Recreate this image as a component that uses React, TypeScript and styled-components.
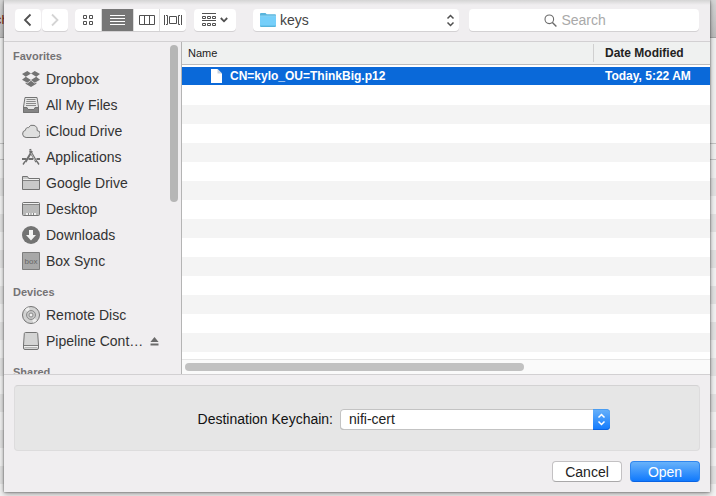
import React from "react";
import styled, { createGlobalStyle, css } from "styled-components";

const GlobalStyle = createGlobalStyle`
  * { box-sizing: border-box; }
  body {
    margin: 0;
    overflow: hidden;
    font-family: "Liberation Sans", Arial, sans-serif;
    font-size: 14px;
    color: #333;
  }
  button, input, select { font: inherit; color: inherit; margin: 0; }
  svg { display: block; flex: none; }
`;

const Backdrop = styled.div`
  position: relative;
  z-index: 0;
  display: flex;
  height: 100vh;
  padding: 0 6px 4px 4px;
  background:
    linear-gradient(#d6d6d6, #bdbdbd 37px, #a4a4a4 37px, #a4a4a4 38px, transparent 38px) no-repeat,
    linear-gradient(#c4c4c4, #c4c4c4) 0 143px / 100% 1px no-repeat,
    linear-gradient(#c4c4c4, #c4c4c4) 0 159px / 100% 1px no-repeat,
    linear-gradient(#f1f1f1, #f1f1f1) 0 0 / 100% 178px no-repeat,
    repeating-linear-gradient(#e3e3e3 0 18px, #f3f3f3 18px 36px) 0 178px;
`;

const BackdropText = styled.span`
  position: absolute;
  z-index: -1;
  top: 12px;
  left: -5px;
  font-size: 13px;
  line-height: 16px;
  color: #8b2a12;
`;

const Dialog = styled.main`
  flex: 1;
  min-width: 0;
  display: flex;
  flex-direction: column;
  background: #f0eef0;
  box-shadow: 0 0 2px rgba(0, 0, 0, 0.55), 0 2px 6px rgba(0, 0, 0, 0.35);
`;

const Toolbar = styled.div`
  flex: none;
  display: flex;
  height: 42px;
  padding: 9px 11px 0;
  border-bottom: 1px solid #d2d0d2;
  background: linear-gradient(#d4d4d4, #f0eef0 5px);
`;

const raised = css`
  height: 22px;
  background: #fff;
  border-radius: 4px;
  box-shadow: 0 1px 0 #d3d1d3;
`;

const Segments = styled.div<{ $joined?: boolean; $after: number }>`
  display: flex;
  flex: none;
  gap: 1px;
  height: 22px;
  margin-right: ${(p) => p.$after}px;
  ${(p) =>
    p.$joined &&
    css`
      overflow: hidden;
      border-radius: 4px;
      background: #dcdcdc;
      box-shadow: 0 1px 0 #d3d1d3;
    `}
`;

const ToolButton = styled.button<{ $width?: number; $active?: boolean; $raised?: boolean; $dim?: boolean }>`
  ${(p) => p.$raised && raised}
  flex: none;
  display: flex;
  align-items: center;
  justify-content: center;
  gap: 4px;
  width: ${(p) => p.$width ?? 26}px;
  height: 22px;
  padding: 0;
  border: 0;
  background: ${(p) => (p.$active ? "#777" : "#fff")};
  color: ${(p) => (p.$active ? "#fff" : p.$dim ? "#d4d4d4" : "#505050")};
`;

const PathBox = styled.div`
  ${raised}
  flex: 1 1 207px;
  min-width: 0;
  display: flex;
  align-items: center;
  gap: 4px;
  margin: 0 10px 0 17px;
  padding: 0 4px 0 7px;
`;

const PlainSelect = styled.select`
  flex: 1;
  min-width: 0;
  height: 22px;
  padding: 0;
  border: 0;
  background: none;
  appearance: none;
  outline: none;
  color: #444;
`;

const SearchBox = styled.label`
  ${raised}
  flex: 1 1 230px;
  min-width: 0;
  display: flex;
  align-items: center;
  gap: 4px;
  padding-left: 75px;
`;

const SearchInput = styled.input`
  flex: 1;
  min-width: 0;
  height: 22px;
  padding: 0;
  border: 0;
  background: none;
  outline: none;
  &::placeholder { color: #a9a9a9; opacity: 1; }
`;

const Browser = styled.div`
  flex: 1;
  min-height: 0;
  display: flex;
  border-bottom: 1px solid #d2d0d2;
`;

const Sidebar = styled.aside`
  flex: none;
  display: flex;
  width: 178px;
  overflow: hidden;
  border-right: 1px solid #b4b4b4;
`;

const Places = styled.nav`
  flex: 1;
  min-width: 0;
  padding-top: 4px;
`;

const Section = styled.section`
  margin-bottom: 8px;
`;

const SectionTitle = styled.h2`
  margin: 0;
  padding-left: 9px;
  font-size: 11px;
  line-height: 20px;
  font-weight: bold;
  color: #757375;
`;

const PlaceList = styled.ul`
  margin: 0;
  padding: 0;
  list-style: none;
`;

const Place = styled.li`
  display: flex;
  align-items: center;
  height: 26px;
  padding: 0 11px 0 18px;
`;

const PlaceLink = styled.a`
  flex: 1;
  min-width: 0;
  display: flex;
  align-items: center;
  gap: 6px;
  color: #333;
  text-decoration: none;
`;

const PlaceName = styled.span`
  white-space: nowrap;
`;

const EjectButton = styled.button`
  padding: 0;
  border: 0;
  background: none;
`;

const VerticalThumb = styled.div`
  flex: none;
  width: 8px;
  height: 157px;
  margin: 3px 3px 0 0;
  border-radius: 4px;
  background: #b6b6b6;
`;

const Listing = styled.div`
  flex: 1;
  min-width: 0;
  display: flex;
  flex-direction: column;
  background: #fff;
`;

const FileTable = styled.table`
  width: 100%;
  border-spacing: 0;
  table-layout: fixed;
`;

const HeadCell = styled.th<{ $sorted?: boolean }>`
  width: ${(p) => (p.$sorted ? "117px" : "auto")};
  height: 23px;
  padding: 0;
  border-bottom: 1px solid #bcbcbc;
  background: #eff1f0;
  text-align: left;
  font-size: ${(p) => (p.$sorted ? 12 : 11)}px;
  font-weight: ${(p) => (p.$sorted ? "bold" : "normal")};
  line-height: 18px;
  color: #222;
`;

const HeadLabel = styled.div<{ $divided?: boolean }>`
  padding-left: ${(p) => (p.$divided ? 11 : 6)}px;
  border-left: ${(p) => (p.$divided ? "1px solid #d0d0d0" : "0")};
`;

const FileCell = styled.td`
  height: 20px;
  padding: 0 0 0 12px;
  border-top: 2px solid #fff;
  background: #0a69d9;
  color: #fff;
  font-size: 12px;
  line-height: 18px;
  font-weight: bold;
  white-space: nowrap;
`;

const FileName = styled.div`
  display: flex;
  align-items: center;
  gap: 8px;
  padding-left: 17px;
`;

const EmptyRows = styled.div`
  flex: 1;
  margin-top: 1px;
  background: repeating-linear-gradient(#fff 0 19px, #f4f4f4 19px 38px);
`;

const HorizontalTrack = styled.div`
  flex: none;
  height: 15px;
  padding: 3px;
  border-top: 1px solid #e6e6e6;
  background: #fafafa;
`;

const HorizontalThumb = styled.div`
  width: 65%;
  height: 8px;
  border-radius: 4px;
  background: #c1c1c1;
`;

const Accessory = styled.div`
  flex: none;
  display: flex;
  align-items: center;
  justify-content: flex-end;
  gap: 7px;
  height: 66px;
  margin: 10px 10px 0;
  padding: 2px 89px 0 0;
  border: 1px solid #dddcdd;
  border-top-color: #d3d2d3;
  border-radius: 4px;
  background: #e6e6e6;
  color: #111;
`;

const KeychainBox = styled.div`
  flex: none;
  display: flex;
  width: 270px;
  height: 21px;
  border-radius: 4px;
  background: #fff;
  box-shadow: inset 0 0 0 1px #c3c3c3, inset 0 -1px 0 #a5a5a5;
`;

const KeychainSelect = styled(PlainSelect)`
  height: 21px;
  padding-left: 9px;
  color: #222;
`;

const Stepper = styled.span`
  display: flex;
  align-items: center;
  justify-content: center;
  width: 17px;
  height: 21px;
  border-radius: 0 4px 4px 0;
  background: linear-gradient(#68b2fa, #1079fd);
  box-shadow: inset 0 1px 0 #4a9df2, inset 0 -1px 0 #0a63e2;
  color: #fff;
  pointer-events: none;
`;

const Actions = styled.div`
  flex: none;
  display: flex;
  justify-content: flex-end;
  gap: 8px;
  padding: 10px 10px;
`;

const PushButton = styled.button<{ $primary?: boolean }>`
  width: 70px;
  height: 21px;
  padding: 0;
  border: 1px solid ${(p) => (p.$primary ? "#2f86ee" : "#c3c1c3")};
  border-bottom-color: ${(p) => (p.$primary ? "#0a63e2" : "#a9a8a9")};
  border-radius: 4px;
  background: ${(p) => (p.$primary ? "linear-gradient(#68b2fa, #1079fd)" : "#fff")};
  color: ${(p) => (p.$primary ? "#fff" : "#222")};
  line-height: 18px;
`;

const Chevron = ({ right }: { right?: boolean }) => (
  <svg width="10" height="14" viewBox="0 0 10 14" fill="none" stroke="currentColor" strokeWidth="1.8">
    <path d={right ? "M2 1.5 7.5 7 2 12.5" : "M7.5 1.5 2 7 7.5 12.5"} />
  </svg>
);

const UpDown = ({ light }: { light?: boolean }) => (
  <svg width="9" height="13" viewBox="0 0 9 13" fill="none" stroke={light ? "#fff" : "#505050"} strokeWidth="1.5">
    <path d="M1.5 4.5 4.5 1.5 7.5 4.5M1.5 8.5 4.5 11.5 7.5 8.5" />
  </svg>
);

const GridIcon = () => (
  <svg width="12" height="12" viewBox="0 0 12 12" fill="none" stroke="currentColor">
    <path d="M1.5 1.5h3v3h-3zM7.5 1.5h3v3h-3zM1.5 7.5h3v3h-3zM7.5 7.5h3v3h-3z" />
  </svg>
);

const LinesIcon = () => (
  <svg width="15" height="12" viewBox="0 0 15 12" stroke="currentColor">
    <path d="M0 1.5h15M0 4.5h15M0 7.5h15M0 10.5h15" />
  </svg>
);

const ColumnsIcon = () => (
  <svg width="16" height="12" viewBox="0 0 16 12" fill="none" stroke="currentColor">
    <path d="M.5 1.5h15v9H.5zM5.5 1.5v9M10.5 1.5v9" />
  </svg>
);

const CoverIcon = () => (
  <svg width="18" height="12" viewBox="0 0 18 12" fill="none" stroke="currentColor">
    <path d="M.5 1v10M2 1.500h1.500v9H2M17.500 1v10M16 1.500h-1.500v9H16M5.500 2.500h7v7h-7z" />
  </svg>
);

const ArrangeIcon = () => (
  <svg width="14" height="14" viewBox="0 0 14 14" fill="none" stroke="currentColor">
    <path d="M0 .5h14M0 7.5h14M.5 3.5h3v2h-3zM5.5 3.5h3v2h-3zM10.5 3.5h3v2h-3zM.5 10.5h3v2h-3zM5.5 10.5h3v2h-3zM10.5 10.5h3v2h-3z" />
  </svg>
);

const DownIcon = () => (
  <svg width="8" height="6" viewBox="0 0 8 6" fill="none" stroke="currentColor" strokeWidth="1.8">
    <path d="M.8 1 4 4.3 7.2 1" />
  </svg>
);

const BlueFolder = () => (
  <svg width="16" height="14" viewBox="0 0 16 14">
    <path d="M0 1q0-1 1-1h4.5l1.2 1.3H15q1 0 1 1V13q0 1-1 1H1q-1 0-1-1z" fill="#58b4dc" />
    <path d="M0 3.2h16V12.6H0z" fill="#76cffa" />
    <path d="M0 2.6h16v.8H0z" fill="#9bdcf8" />
  </svg>
);

const SearchIcon = () => (
  <svg width="13" height="13" viewBox="0 0 13 13" fill="none" stroke="#6a6a6a" strokeWidth="1.1">
    <circle cx="5.3" cy="5.3" r="4.3" />
    <path d="m8.4 8.4 4 4" strokeWidth="1.4" />
  </svg>
);

const FileIcon = () => (
  <svg width="11" height="14" viewBox="0 0 11 14">
    <path d="M0 0h6.5L11 4.5V14H0z" fill="#fff" />
    <path d="M6.5 0v4.5H11z" fill="#c9d3df" />
  </svg>
);

const Eject = () => (
  <svg width="9" height="9" viewBox="0 0 9 9" fill="#6a6a6a">
    <path d="M4.5 0 8.6 5H.4zM.5 6.5h8v2h-8z" />
  </svg>
);

const glyphs: Record<string, React.ReactNode> = {
  dropbox: (
    <path
      fill="#737373"
      d="M5.3 1 9 3.6 3.8 6.8 0 4zM12.7 1 18 4l-3.8 2.8L9 3.6zM3.8 6.8 9 10l-3.7 2.8L0 9.7zM14.2 6.8 18 9.7l-5.3 3.1L9 10zM9 10.8l3.7 2.8 1.7-1v1.100L9 17l-5.400-3.300v-1.100l1.700 1z"
    />
  ),
  files: (
    <>
      <path d="M3 1.5h12l1.500 9.500v5.500h-15V11z" fill="#e6e6e6" stroke="#737373" />
      <path d="M4.500 3.500h9M4.300 5.500h9.400M4 7.500h10M4 9.500h10" stroke="#8a8a8a" />
      <path d="M1.500 11.500h3.500l1 2h6l1-2h3.500v5h-15z" fill="#858585" stroke="#737373" />
    </>
  ),
  cloud: (
    <path
      d="M4.100 15.500a3.700 3.700 0 0 1-.6-7.300 2.500 2.500 0 0 1 3-2.600 4.600 4.600 0 0 1 8.600 2.900 3.500 3.500 0 0 1-.8 7z"
      fill="#dfdfdf"
      stroke="#737373"
    />
  ),
  apps: (
    <g fill="none" stroke="#6e6e6e">
      <path d="M10 3 3.500 14" strokeWidth="2" />
      <path d="m8 3 6.500 11" strokeWidth="2.400" />
      <path d="m9 5 4.500 8" stroke="#d0d0d0" strokeWidth=".8" />
      <path d="M0 11h4.500M6.500 11h4.500M14.500 11H18" strokeWidth="2" />
      <path d="m3 13.500-2 3M15 13.500l2 3M7.300 2.200l2-.7" strokeWidth="1.400" />
    </g>
  ),
  folder: (
    <>
      <path d="M.5 15.500v-13h5l1.200 2h10.800v11z" fill="#c9c9c9" stroke="#737373" />
      <path d="M1 5.500h16" stroke="#f0f0f0" />
      <path d="M1 6.500h16" stroke="#838383" />
    </>
  ),
  desktop: (
    <>
      <rect x=".5" y="2.5" width="17" height="13" rx="1" fill="#b9b9b9" stroke="#737373" />
      <path d="M1 3.500h16" stroke="#f0f0f0" />
      <path d="M1 4.500h16" stroke="#838383" />
      <path d="M4 13h10v2H4z" fill="#f2f2f2" />
      <path d="M6.500 13v2M9 13v2M11.500 13v2" stroke="#888" />
    </>
  ),
  downloads: (
    <>
      <circle cx="9" cy="9" r="9" fill="#737373" />
      <path d="M7 4h4v5h3l-5 5.500L4 9h3z" fill="#f4f4f4" />
    </>
  ),
  box: (
    <>
      <path d="M.5.5h17v17H.5z" fill="#a8a8a8" stroke="#7e7e7e" />
      <text x="9" y="12" textAnchor="middle" fontSize="8" fontFamily="Liberation Sans, sans-serif" fill="#666">
        box
      </text>
    </>
  ),
  disc: (
    <>
      <circle cx="9" cy="9" r="8.5" fill="#d2d2d2" stroke="#737373" />
      <path d="M9 9 3 3.500A8 8 0 0 1 7 1.300zM9 9l6 5.500a8 8 0 0 1-4 2.200z" fill="#efefef" />
      <circle cx="9" cy="9" r="4.500" fill="#c6c6c6" stroke="#8a8a8a" />
      <circle cx="9" cy="9" r="2" fill="#f2f2f2" stroke="#8a8a8a" />
    </>
  ),
  drive: (
    <>
      <path d="M3.500.5h11q1 0 1.200 1l.8 11.500v3q0 1.500-1.500 1.500H3q-1.500 0-1.500-1.500v-3L2.300 1.500q.2-1 1.200-1z" fill="#d4d4d4" stroke="#737373" />
      <path d="M2 13.500h14" stroke="#7d7d7d" />
      <path d="M2 14.500h14" stroke="#f0f0f0" />
      <path d="M3 15.500h12" stroke="#b5b5b5" />
    </>
  ),
};

const PlaceIcon = ({ name }: { name: string }) => (
  <svg width="18" height="18" viewBox="0 0 18 18">
    {glyphs[name]}
  </svg>
);

const sections = [
  {
    title: "Favorites",
    places: [
      ["dropbox", "Dropbox"],
      ["files", "All My Files"],
      ["cloud", "iCloud Drive"],
      ["apps", "Applications"],
      ["folder", "Google Drive"],
      ["desktop", "Desktop"],
      ["downloads", "Downloads"],
      ["box", "Box Sync"],
    ],
  },
  {
    title: "Devices",
    places: [
      ["disc", "Remote Disc"],
      ["drive", "Pipeline Cont…"],
    ],
  },
  { title: "Shared", places: [] },
];

export default function App() {
  return (
    <>
      <GlobalStyle />
      <Backdrop>
        <BackdropText aria-hidden="true">ch</BackdropText>
        <Dialog>
          <Toolbar>
            <Segments $after={7}>
              <ToolButton $raised aria-label="Back"><Chevron /></ToolButton>
              <ToolButton $raised $dim aria-label="Forward"><Chevron right /></ToolButton>
            </Segments>
            <Segments $joined $after={8}>
              <ToolButton aria-label="Icon view"><GridIcon /></ToolButton>
              <ToolButton $active $width={31} aria-label="List view"><LinesIcon /></ToolButton>
              <ToolButton $width={25} aria-label="Column view"><ColumnsIcon /></ToolButton>
              <ToolButton aria-label="Cover Flow view"><CoverIcon /></ToolButton>
            </Segments>
            <ToolButton $raised $width={42} aria-label="Arrange"><ArrangeIcon /><DownIcon /></ToolButton>
            <PathBox>
              <BlueFolder />
              <PlainSelect aria-label="Folder"><option>keys</option></PlainSelect>
              <UpDown />
            </PathBox>
            <SearchBox>
              <SearchIcon />
              <SearchInput type="text" placeholder="Search" aria-label="Search" />
            </SearchBox>
          </Toolbar>
          <Browser>
            <Sidebar>
              <Places>
                {sections.map((s) => (
                  <Section key={s.title}>
                    <SectionTitle>{s.title}</SectionTitle>
                    <PlaceList>
                      {s.places.map(([icon, name]) => (
                        <Place key={name}>
                          <PlaceLink href="#">
                            <PlaceIcon name={icon} />
                            <PlaceName>{name}</PlaceName>
                          </PlaceLink>
                          {icon === "drive" && <EjectButton aria-label="Eject"><Eject /></EjectButton>}
                        </Place>
                      ))}
                    </PlaceList>
                  </Section>
                ))}
              </Places>
              <VerticalThumb />
            </Sidebar>
            <Listing>
              <FileTable>
                <thead>
                  <tr>
                    <HeadCell><HeadLabel>Name</HeadLabel></HeadCell>
                    <HeadCell $sorted><HeadLabel $divided>Date Modified</HeadLabel></HeadCell>
                  </tr>
                </thead>
                <tbody>
                  <tr>
                    <FileCell><FileName><FileIcon />CN=kylo_OU=ThinkBig.p12</FileName></FileCell>
                    <FileCell>Today, 5:22 AM</FileCell>
                  </tr>
                </tbody>
              </FileTable>
              <EmptyRows />
              <HorizontalTrack><HorizontalThumb /></HorizontalTrack>
            </Listing>
          </Browser>
          <Accessory>
            <label htmlFor="keychain">Destination Keychain:</label>
            <KeychainBox>
              <KeychainSelect id="keychain"><option>nifi-cert</option></KeychainSelect>
              <Stepper><UpDown light /></Stepper>
            </KeychainBox>
          </Accessory>
          <Actions>
            <PushButton>Cancel</PushButton>
            <PushButton $primary>Open</PushButton>
          </Actions>
        </Dialog>
      </Backdrop>
    </>
  );
}
